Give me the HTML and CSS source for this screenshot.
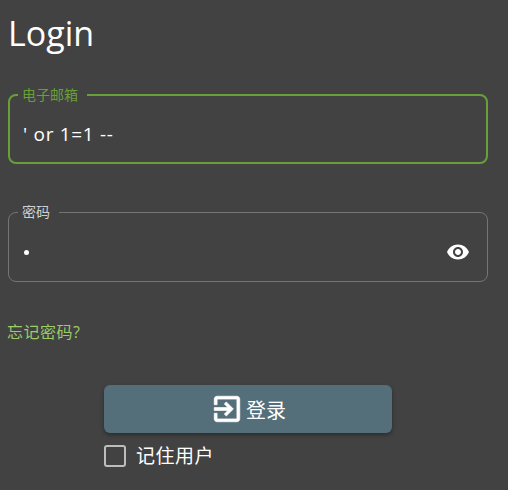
FILE: index.html
```html
<!DOCTYPE html>
<html lang="zh">
<head>
<meta charset="utf-8">
<title>Login</title>
<link rel="stylesheet" href="styles.css">
</head>
<body>
<main class="page">
  <h1 class="title">Login</h1>
  <fieldset class="field field-active">
    <legend class="legend">电子邮箱</legend>
    <div class="value">' or 1=1 --</div>
  </fieldset>
  <fieldset class="field field-idle">
    <legend class="legend">密码</legend>
    <div class="value-row">
      <span class="dot"></span>
      <svg class="eye" viewBox="0 0 24 24" width="24" height="24"><path fill="#fff" d="M12 4.5C7 4.5 2.73 7.61 1 12c1.73 4.39 6 7.5 11 7.5s9.27-3.11 11-7.5c-1.73-4.39-6-7.5-11-7.5zM12 17c-2.76 0-5-2.24-5-5s2.24-5 5-5 5 2.24 5 5-2.24 5-5 5zm0-8c-1.66 0-3 1.34-3 3s1.34 3 3 3 3-1.34 3-3-1.34-3-3-3z"/></svg>
    </div>
  </fieldset>
  <a class="forgot" href="#">忘记密码?</a>
  <div class="actions">
    <button class="login" type="button">
      <svg class="login-icon" viewBox="0 0 24 24" width="34" height="34"><path fill="#fff" stroke="#fff" stroke-width="0.5" d="M10.09 15.59L11.5 17l5-5-5-5-1.41 1.41L12.67 11H3v2h9.67l-2.58 2.59zM19 3H5c-1.11 0-2 .9-2 2v4h2V5h14v14H5v-4H3v4c0 1.1.89 2 2 2h14c1.1 0 2-.9 2-2V5c0-1.1-.9-2-2-2z"/></svg>
      <span>登录</span>
    </button>
    <label class="remember"><span class="box"></span><span>记住用户</span></label>
  </div>
</main>
</body>
</html>
```
FILE: styles.css
```css
html, body {
  margin: 0;
  height: 100%;
  background: #424242;
  overflow: hidden;
}
body {
  font-family: "Open Sans", "Noto Sans CJK SC", sans-serif;
  color: #fff;
}
.page {
  padding: 0 20px 0 8px;
  display: flex;
  flex-direction: column;
}
.title {
  margin: 11px 0 0;
  font-size: 34px;
  line-height: 45px;
  font-weight: 400;
  height: 45px;
}
.field {
  margin: 0;
  min-width: 0;
  border-style: solid;
  border-radius: 8px;
  box-sizing: border-box;
  padding: 0 14px 0 8px;
}
.field-active {
  margin-top: 32px;
  height: 76px;
  border-width: 2px;
  border-color: #689f38;
  color: #689f38;
}
.field-idle {
  margin-top: 41px;
  height: 77px;
  border-width: 1px;
  border-color: #757575;
  color: #d0d0d0;
}
.legend {
  padding: 0 9px 0 4px;
  font-size: 14px;
  line-height: 14px;
  height: 14px;
}
.field-idle .legend { margin-left: 1px; }
.value {
  color: #fff;
  font-size: 19px;
  line-height: 24px;
  letter-spacing: 0.7px;
  font-weight: 500;
  margin: 20px 0 0 5px;
}
.value-row {
  display: flex;
  align-items: center;
  justify-content: space-between;
  height: 24px;
  margin: 21px 3px 0 7px;
}
.dot {
  width: 5px;
  height: 5px;
  border-radius: 50%;
  background: #fff;
}
.eye { display: block; }
.forgot {
  margin-top: 40px;
  margin-left: -1px;
  color: #9ccc65;
  font-size: 16px;
  line-height: 20px;
  letter-spacing: 0.5px;
  text-decoration: none;
}
.actions {
  margin-top: 43px;
  margin-left: 96px;
  width: 288px;
  display: flex;
  flex-direction: column;
}
.login {
  height: 48px;
  border: 0;
  border-radius: 6px;
  background: #546e7a;
  color: #fff;
  font: inherit;
  font-size: 20px;
  display: flex;
  align-items: center;
  justify-content: center;
  gap: 2px;
  padding: 0;
  box-shadow: 0 2px 4px rgba(0,0,0,.35);
}
.login-icon { display: block; }
.remember {
  margin-top: 12px;
  display: flex;
  align-items: center;
  gap: 10px;
  font-size: 19px;
  line-height: 22px;
  letter-spacing: 0.5px;
}
.box {
  width: 22px;
  height: 22px;
  box-sizing: border-box;
  border: 2px solid #bdbdbd;
  border-radius: 3px;
}
```
